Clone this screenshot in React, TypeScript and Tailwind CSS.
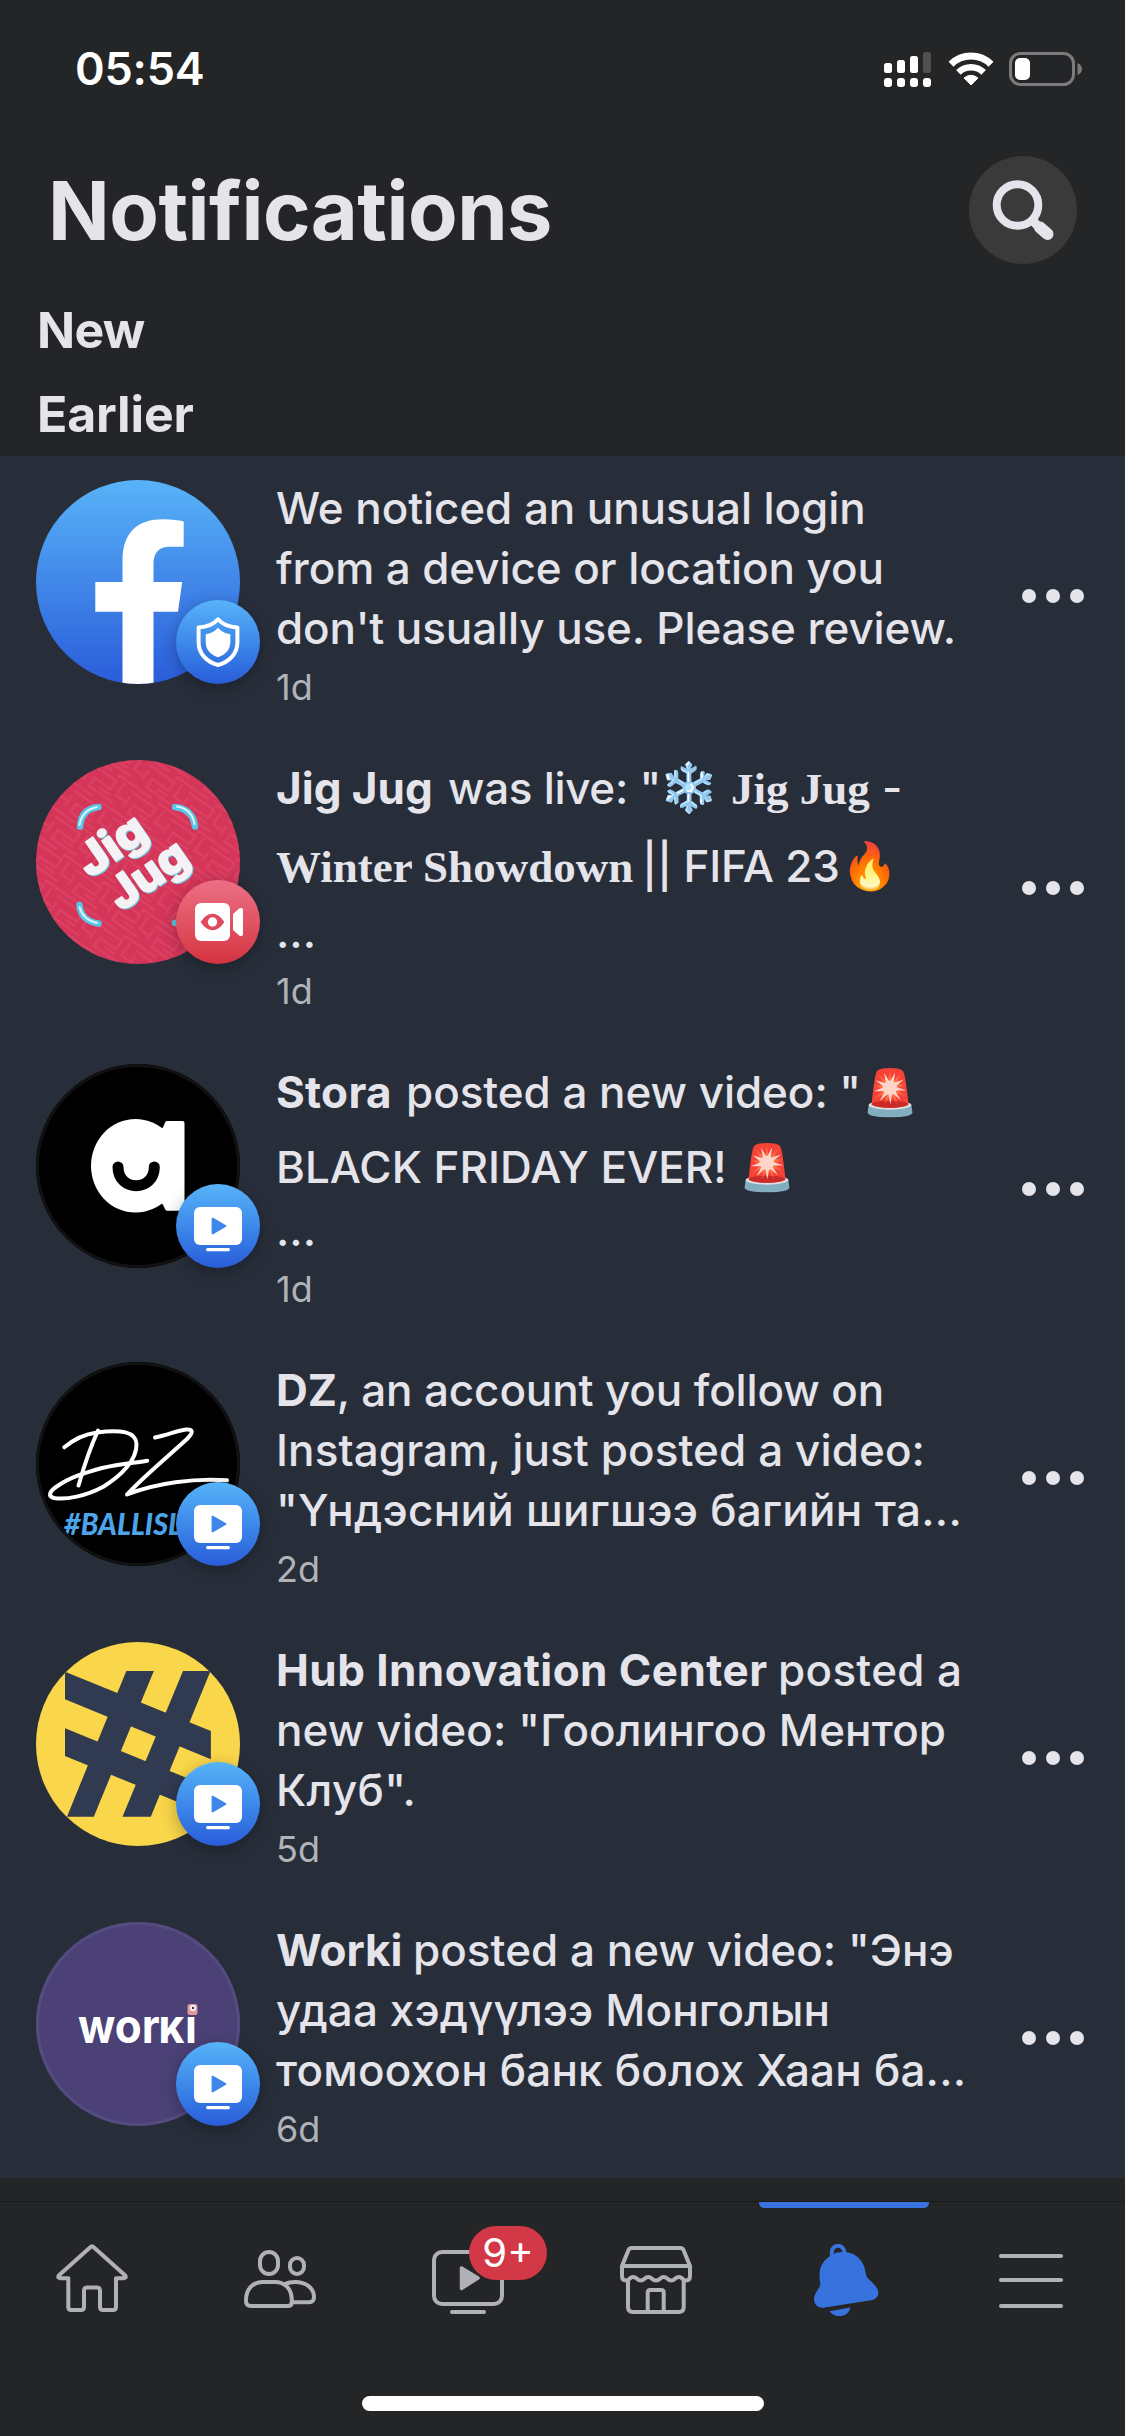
import type { ReactNode } from "react";

function StatusBar() {
  return (
    <div className="flex h-[140px] items-start justify-between pl-[75px] pr-[43px] pt-[42px] text-white">
      <span className="text-[45px] font-semibold leading-[54px] tracking-[-0.2px]">05:54</span>
      <div className="mt-[10px] flex items-start">
        <svg width="47" height="36" viewBox="0 0 47 36" fill="currentColor">
          <rect x="0" y="11" width="8" height="10" rx="2.5" />
          <rect x="13" y="8" width="8" height="13" rx="2.5" />
          <rect x="26" y="4" width="8" height="17" rx="2.5" />
          <rect x="39" y="0" width="8" height="21" rx="2.5" fill="#505051" />
          <rect x="0" y="26" width="8" height="9" rx="3" />
          <rect x="13" y="26" width="8" height="9" rx="3" />
          <rect x="26" y="26" width="8" height="9" rx="3" />
          <rect x="39" y="26" width="8" height="9" rx="3" />
        </svg>
        <svg className="ml-[17px]" width="46" height="34" viewBox="0 0 46 34" fill="none">
          <path d="M3 12.2A28.5 28.5 0 0 1 43 12.2" stroke="white" strokeWidth="7" />
          <path d="M10.4 20.4A18 18 0 0 1 35.6 20.4" stroke="white" strokeWidth="6.5" />
          <path d="M23 33L16 26Q23 20.5 30 26Z" fill="white" stroke="white" strokeLinejoin="round" />
        </svg>
        <svg className="ml-[15px]" width="73" height="34" viewBox="0 0 73 34" fill="none">
          <rect x="1.5" y="1.5" width="63" height="31" rx="10" stroke="#7b7b7d" strokeWidth="3" />
          <rect x="6" y="6" width="15" height="22" rx="5" fill="white" />
          <path d="M68.5 11Q73 13 73 17T68.5 23Z" fill="#7b7b7d" />
        </svg>
      </div>
    </div>
  );
}

function Header() {
  return (
    <header className="flex h-[140px] items-start justify-between pl-[48px] pr-[48px]">
      <h1 className="mt-[22px] text-[81px] font-bold leading-[98px] tracking-[-0.5px]">Notifications</h1>
      <button className="mt-4 size-[108px] rounded-full bg-[#3a3a3b]" aria-label="Search">
        <svg width="108" height="108" viewBox="0 0 108 108" fill="none" stroke="#e4e4ea" strokeLinecap="round">
          <circle cx="48.5" cy="49" r="20.8" strokeWidth="8" />
          <path d="M65 66L71 72" strokeWidth="9" />
          <path d="M71 71.5L78.5 78" strokeWidth="12" />
        </svg>
      </button>
    </header>
  );
}

function BlueVideoIcon() {
  return (
    <svg width="84" height="84" viewBox="0 0 84 84" fill="white">
      <rect x="18" y="23" width="48" height="38" rx="6" />
      <rect x="30" y="64" width="24" height="3.2" rx="1.6" />
      <path d="M36.6 34.7V49.3L49.5 42Z" fill="#3f87ea" stroke="#3f87ea" strokeWidth="2" strokeLinejoin="round" />
    </svg>
  );
}

function ShieldIcon() {
  return (
    <svg width="84" height="84" viewBox="0 0 84 84" fill="none">
      <path
        d="M42 19.3C46 24 53 27 61.4 27.6V42C61.4 54 53 62 42 65C31 62 22.6 54 22.6 42V27.6C31 27 38 24 42 19.3Z"
        stroke="white"
        strokeWidth="4"
        strokeLinejoin="round"
      />
      <path d="M42 27.7C45 31.5 50 33.6 54.3 34.2V42C54.3 50 49 55 42 57.3C35 55 29.7 50 29.7 42V34.2C34 33.6 39 31.5 42 27.7Z" fill="white" />
    </svg>
  );
}

function LiveIcon() {
  return (
    <svg width="84" height="84" viewBox="0 0 84 84" fill="white">
      <rect x="19" y="23" width="35" height="38" rx="6" />
      <path d="M57 34L63.5 28.3Q67 27 67 30V54Q67 57 63.5 55.7L57 50Z" />
      <path d="M24.6 42Q30 33.8 36.5 33.8T48.4 42Q43 50.2 36.5 50.2T24.6 42Z" fill="#e04a5f" />
      <circle cx="36.5" cy="42" r="4.7" />
    </svg>
  );
}

function FacebookAvatar() {
  return (
    <svg width="204" height="204" viewBox="0 0 204 204">
      <defs>
        <linearGradient id="fb" x1="0" y1="0" x2="0" y2="1">
          <stop offset="0" stopColor="#58b3f8" />
          <stop offset="1" stopColor="#2a5cda" />
        </linearGradient>
      </defs>
      <rect width="204" height="204" fill="url(#fb)" />
      <path
        d="M86.5 204V131.7H59.3V102H86.5V81C86.5 52 102 39.3 127 39.3C136 39.3 143 40.3 147.7 41.5V66.7H134C121.5 66.7 117.5 74 117.5 84V102H146.2L142 131.7H117.5V204Z"
        fill="white"
      />
    </svg>
  );
}

function JigJugAvatar() {
  return (
    <svg width="204" height="204" viewBox="0 0 204 204">
      <defs>
        <pattern id="maze" width="48" height="32" patternUnits="userSpaceOnUse" patternTransform="rotate(35)">
          <path
            d="M0 3H30V13H10V23H40M0 29H20M38 0V15H48M20 18H32M48 29H30V32M2 8V20"
            fill="none"
            stroke="#e04a6a"
            strokeWidth="2.4"
            opacity="0.6"
          />
        </pattern>
      </defs>
      <rect width="204" height="204" fill="#d43558" />
      <rect width="204" height="204" fill="url(#maze)" />
      <g fill="none" stroke="#58c6e6" strokeWidth="6.5" strokeLinecap="round">
        <path d="M44 66.5Q45 49 62.5 47M139 47Q157 49 159 66.5M43.5 145Q45 161 62.5 163.5M139 163Q157 161 159 145" />
      </g>
      <g fill="none" stroke="#d9f5fb" strokeWidth="2" strokeLinecap="round">
        <path d="M43.5 65Q46 50 61 47M141 46.5Q156 49 158.5 64M43.5 147Q47 160 61 163" />
      </g>
      <g
        fontFamily="Inter, sans-serif"
        fontWeight="800"
        fontSize="45"
        fill="#f4f2f4"
        stroke="#f4f2f4"
        strokeLinejoin="round"
        strokeWidth="1.6"
        style={{ filter: "drop-shadow(1px 1.5px 0 #6cc4dc)" }}
      >
        <text transform="translate(54 119) rotate(-35)" textLength="74" lengthAdjust="spacingAndGlyphs">
          Jig
        </text>
        <text transform="translate(85 152) rotate(-35)" textLength="87" lengthAdjust="spacingAndGlyphs">
          Jug
        </text>
      </g>
    </svg>
  );
}

function StoraAvatar() {
  return (
    <svg width="204" height="204" viewBox="0 0 204 204">
      <rect width="204" height="204" fill="black" />
      <ellipse cx="99.5" cy="101.8" rx="44.5" ry="46.8" fill="white" />
      <path
        d="M112 66H124.5Q128 63 129 58.5Q129.5 57 131 57H146.5Q148.5 57 148.5 59V144.7Q148.5 146.7 146.5 146.7H131Q129.5 146.7 129 145Q128 141 124.5 138H112Z"
        fill="white"
      />
      <path d="M82 103C82 128 118.3 128 118.3 103" fill="none" stroke="black" strokeWidth="11" strokeLinecap="round" />
    </svg>
  );
}

function DzAvatar() {
  return (
    <svg width="204" height="204" viewBox="0 0 204 204">
      <rect width="204" height="204" fill="black" />
      <g fill="none" stroke="white" strokeLinecap="round" strokeLinejoin="round" strokeWidth="4">
        <path d="M28.3 85.3C38 77 50 72 61 70.5C85 67 100 70 100.5 82C101 98 85 114 67.3 124.7C50 134 30 138 18 136C12 134.5 13 130 20 125C34 115 50 110.5 66 106C85 101.5 98 101 111.3 98.7" />
        <path d="M62 68.5C54 86 48 104 42.5 123.5" />
        <path d="M119 75.5C133 72.5 141 68.5 150 67.5C158 67 157 71 151 77C128 98 107 115 91 132.5C120 121 158 116 191 118.3" />
      </g>
      <text
        x="28"
        y="173"
        fill="#4ba5e8"
        fontFamily="Lato, sans-serif"
        fontWeight="900"
        fontStyle="italic"
        fontSize="31"
        textLength="118"
        lengthAdjust="spacingAndGlyphs"
      >
        #BALLISL
      </text>
    </svg>
  );
}

function HubAvatar() {
  return (
    <svg width="204" height="204" viewBox="0 0 204 204">
      <rect width="204" height="204" fill="#f9d64a" />
      <g fill="#303a51">
        <path d="M90.3 29H117.8L57.8 174.7H31Z" />
        <path d="M147 29H174.5L114.8 174.7H86.5Z" />
        <path d="M29 29.7L174.9 89V117.3L29 57.3Z" />
        <path d="M29 86.3L174.9 145.8V173.5L29 114Z" />
      </g>
    </svg>
  );
}

function WorkiAvatar() {
  return (
    <svg width="204" height="204" viewBox="0 0 204 204">
      <rect width="204" height="204" fill="#4b4177" />
      <text x="42" y="121.3" fill="white" fontFamily="Inter, sans-serif" fontWeight="700" fontSize="47" textLength="119" lengthAdjust="spacingAndGlyphs">
        wor
        <tspan fontSize="36" fontWeight="900">
          K
        </tspan>
        i
      </text>
      <rect x="150" y="80" width="13" height="14" fill="#4b4177" />
      <rect x="151.5" y="82" width="10" height="11" rx="2.5" fill="#e09a9e" />
      <circle cx="157" cy="86" r="3" fill="white" />
      <circle cx="157" cy="86" r="1.3" fill="#39325c" />
    </svg>
  );
}

type RowProps = {
  height: string;
  avatar: ReactNode;
  ring?: string;
  badge: ReactNode;
  badgeColor: string;
  time: string;
  children: ReactNode;
};

const BLUE = "from-[#58b3f8] to-[#2a5cda]";
const RED = "from-[#ec6f85] to-[#d4313f]";

function Row({ height, avatar, ring = "", badge, badgeColor, time, children }: RowProps) {
  return (
    <li className={`flex items-start pl-9 pr-[41px] ${height}`}>
      <div className="relative mt-6 size-[204px] shrink-0">
        <div className="size-[204px] overflow-hidden rounded-full">{avatar}</div>
        <div className={`absolute inset-0 rounded-full ${ring}`} />
        <div
          className={`absolute bottom-0 -right-5 size-[84px] rounded-full bg-linear-to-b shadow-[0_4px_16px_rgba(0,0,0,0.28)] ${badgeColor}`}
        >
          {badge}
        </div>
      </div>
      <div className="ml-9 mt-[22px] flex-1 whitespace-pre text-[44px] font-[450] leading-[60px]">
        {children}
        <div className="mt-px text-[36px] font-normal leading-[56px] text-[#b0b3b8]">{time}</div>
      </div>
      <button className="flex gap-[10px] self-center" aria-label="More">
        <span className="size-[14px] rounded-full bg-[#e4e4ea]" />
        <span className="size-[14px] rounded-full bg-[#e4e4ea]" />
        <span className="size-[14px] rounded-full bg-[#e4e4ea]" />
      </button>
    </li>
  );
}

function Line({ className = "", children }: { className?: string; children: ReactNode }) {
  return <div className={`flex h-[60px] items-baseline ${className}`}>{children}</div>;
}

const DARK_RING = "border-[3px] border-[#111112]";

function NotificationList() {
  return (
    <ul className="h-[1722px] bg-[#272e3a]">
      <Row height="h-[280px]" avatar={<FacebookAvatar />} badge={<ShieldIcon />} badgeColor={BLUE} time="1d">
        <Line className="tracking-[-0.08px]">We noticed an unusual login</Line>
        <Line className="tracking-[-0.1px]">from a device or location you</Line>
        <Line className="tracking-[-0.1px]">don't usually use. Please review.</Line>
      </Row>
      <Row height="h-[304px]" avatar={<JigJugAvatar />} badge={<LiveIcon />} badgeColor={RED} time="1d">
        <Line>
          <span className="w-[172px] font-bold">Jig Jug</span>
          <span className="w-[211px] tracking-[-0.3px]">was live: "</span>
          <span className="w-[72px] text-[48px] leading-none">❄️</span>
          <span className="w-[151px] font-['Liberation_Serif',serif] text-[45px] font-bold">Jig Jug</span>
          <span>-</span>
        </Line>
        <Line className="mt-[18px]">
          <span className="w-[366px] font-['Liberation_Serif',serif] text-[45px] font-bold">Winter Showdown</span>
          <span className="w-[199px] tracking-[-0.2px]">|| FIFA 23</span>
          <span className="text-[46px] leading-none">🔥</span>
        </Line>
        <Line className="mt-[6px]">...</Line>
      </Row>
      <Row height="h-[298px]" avatar={<StoraAvatar />} ring={DARK_RING} badge={<BlueVideoIcon />} badgeColor={BLUE} time="1d">
        <Line>
          <span className="w-[130px] font-bold tracking-[0.3px]">Stora</span>
          <span className="w-[456px] tracking-[-0.05px]">posted a new video: "</span>
          <span className="text-[45px] leading-none">🚨</span>
        </Line>
        <Line className="mt-[15px]">
          <span className="w-[463px]">BLACK FRIDAY EVER!</span>
          <span className="text-[45px] leading-none">🚨</span>
        </Line>
        <Line className="mt-[3px]">...</Line>
      </Row>
      <Row height="h-[280px]" avatar={<DzAvatar />} ring={DARK_RING} badge={<BlueVideoIcon />} badgeColor={BLUE} time="2d">
        <Line className="tracking-[-0.12px]">
          <span className="font-bold">DZ</span>, an account you follow on
        </Line>
        <Line className="tracking-[0.1px]">Instagram, just posted a video:</Line>
        <Line className="tracking-[0.3px]">"Үндэсний шигшээ багийн та...</Line>
      </Row>
      <Row height="h-[280px]" avatar={<HubAvatar />} badge={<BlueVideoIcon />} badgeColor={BLUE} time="5d">
        <Line>
          <span className="w-[502px] font-bold tracking-[0.45px]">Hub Innovation Center</span>
          <span className="tracking-[0.3px]">posted a</span>
        </Line>
        <Line className="tracking-[0.13px]">new video: "Гоолингоо Ментор</Line>
        <Line className="tracking-[0.3px]">Клуб".</Line>
      </Row>
      <Row
        height="h-[280px]"
        avatar={<WorkiAvatar />}
        ring="border-[3px] border-[#554b80]"
        badge={<BlueVideoIcon />}
        badgeColor={BLUE}
        time="6d"
      >
        <Line>
          <span className="w-[137px] font-bold">Worki</span>
          <span className="tracking-[0.03px]">posted a new video: "Энэ</span>
        </Line>
        <Line className="tracking-[0.12px]">удаа хэдүүлээ Монголын</Line>
        <Line className="tracking-[0.2px]">томоохон банк болох Хаан ба...</Line>
      </Row>
    </ul>
  );
}

function HomeIcon() {
  return (
    <svg width="72" height="70" viewBox="0 0 72 70" fill="none" stroke="currentColor" strokeWidth="4" strokeLinejoin="round">
      <path d="M34.3 3.2Q36 1.5 37.7 3.2L69 31.3Q71 34 67.5 34.2H60V63Q60 66 57 66H47Q44 66 44 63V46.5Q44 43.5 41 43.5H31Q28 43.5 28 46.5V63Q28 66 25 66H15.3Q12.3 66 12.3 63V34.2H4.5Q1 34 3 31.3Z" />
    </svg>
  );
}

function FriendsIcon() {
  return (
    <svg width="72" height="58" viewBox="0 0 72 58" fill="none" stroke="currentColor" strokeWidth="4" strokeLinecap="round" strokeLinejoin="round">
      <rect x="16" y="2" width="18" height="22" rx="9" />
      <rect x="46" y="8" width="14" height="16" rx="7" />
      <path d="M2 50C2 39 9 32 18.5 32H31C41 32 47.8 39 47.8 50V52Q47.8 56 44 56H7Q2 56 2 51Z" />
      <path d="M41.5 34C44 32.5 47 32 51 32C62 32 70 38 70 47Q70 52.2 65 52.2H49" />
    </svg>
  );
}

function WatchIcon() {
  return (
    <svg width="72" height="64" viewBox="0 0 72 64" fill="none" stroke="currentColor" strokeWidth="4" strokeLinejoin="round">
      <rect x="2" y="2" width="68" height="52" rx="8" />
      <path d="M20 62H52" strokeLinecap="round" />
      <path d="M29.5 18V38.5L46 28Z" fill="currentColor" strokeWidth="3.5" />
    </svg>
  );
}

function ShopIcon() {
  return (
    <svg width="72" height="68" viewBox="0 0 72 68" fill="none" stroke="currentColor" strokeWidth="4" strokeLinejoin="round">
      <path d="M2 20L8.5 4Q9.5 2 11.5 2H60.5Q62.5 2 63.5 4L70 20Z" />
      <path d="M2 20V30Q2 34.5 6 34.5C9.5 34.5 9.5 31 13 31C17 31 17 34.5 20.7 34.5C24.5 34.5 24.5 31 28.4 31C32 31 32 34.5 36 34.5C40 34.5 40 31 43.6 31C47.5 31 47.5 34.5 51.3 34.5C55 34.5 55 31 59 31C62.5 31 62.5 34.5 66 34.5Q70 34.5 70 30V20" />
      <path d="M8 35V61Q8 66 13 66H59Q63.7 66 63.7 61V35" />
      <path d="M27.7 66V46.5Q27.7 44 30.2 44H41.2Q43.7 44 43.7 46.5V66" />
    </svg>
  );
}

function BellIcon() {
  return (
    <svg width="65" height="72" viewBox="0 0 65 72" fill="#3872de">
      <path d="M17.8 12V8A6.2 6.2 0 0 1 30.2 8V11" fill="none" stroke="#3872de" strokeWidth="4" />
      <path d="M16.4 11.7C21 8.5 27 7.6 33 8.3C44 10.5 50 18 51.5 28Q52 32.5 54 34.5C60 40 64.3 44 64.3 49C64.3 53 61 55.6 57 56.2L9 63.7C3.5 64 0 60 0 55C0 49 6.3 44 6.2 40C5 30 4 20 16.4 11.7Z" />
      <path d="M15.6 67.3L36.4 63.4C35.5 68.5 31 72 25.4 72C21 72 17.5 70.5 15.6 67.3Z" />
    </svg>
  );
}

function TabBar() {
  return (
    <nav className="flex h-[195px] items-start border-t border-[#191a1b] text-[#b0b1b7]">
      <div className="flex w-[184px] justify-center pt-[42px]">
        <HomeIcon />
      </div>
      <div className="flex w-[192px] justify-center pt-12">
        <FriendsIcon />
      </div>
      <div className="flex w-[184px] justify-center pt-12">
        <div className="relative">
          <WatchIcon />
          <span className="absolute left-[37px] -top-6 flex h-[54px] w-[78px] items-center justify-center rounded-full bg-[#d33846] text-[40px] leading-none text-white">
            9+
          </span>
        </div>
      </div>
      <div className="flex w-[192px] justify-center pt-11">
        <ShopIcon />
      </div>
      <div className="flex w-[184px] flex-col items-center">
        <div className="h-[6px] w-[170px] rounded-b-[5px] bg-[#3872de]" />
        <div className="mt-9 pl-1">
          <BellIcon />
        </div>
      </div>
      <div className="flex flex-1 justify-center pl-px pt-[52px]">
        <div className="flex w-16 flex-col">
          <span className="h-1 rounded-full bg-current" />
          <span className="mt-5 h-1 rounded-full bg-current" />
          <span className="mt-[22px] h-1 rounded-full bg-current" />
        </div>
      </div>
    </nav>
  );
}

export default function App() {
  return (
    <div className="flex h-[2436px] w-[1125px] flex-col overflow-hidden bg-[#242526] font-['Inter','Noto_Color_Emoji',sans-serif] text-[#e4e4ea]">
      <StatusBar />
      <Header />
      <section className="h-[176px] pl-[37px] text-[50px] font-bold">
        <h2 className="pt-[20px] leading-[60px] tracking-[-0.7px]">New</h2>
        <h2 className="mt-6 leading-[60px] tracking-[-0.15px]">Earlier</h2>
      </section>
      <NotificationList />
      <div className="h-[23px]" />
      <TabBar />
      <div className="mx-auto h-[15px] w-[402px] rounded-full bg-white" />
    </div>
  );
}
